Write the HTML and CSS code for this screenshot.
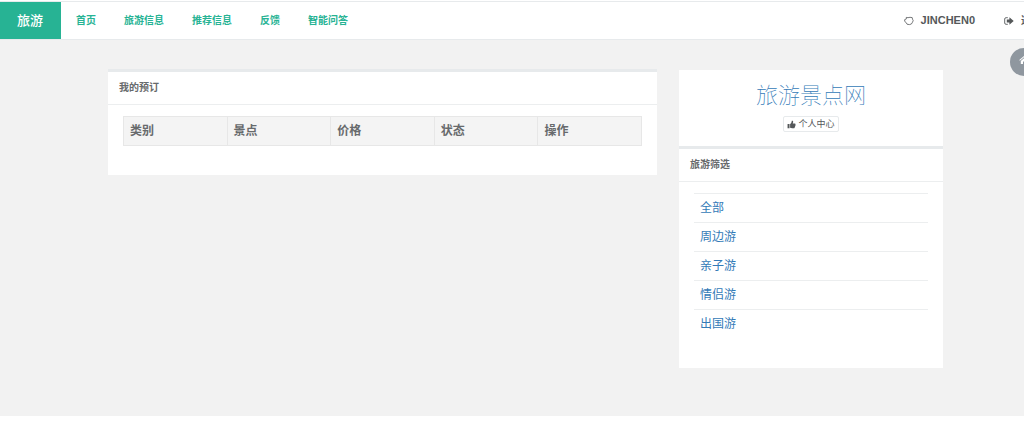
FILE: index.html
```html
<!DOCTYPE html>
<html lang="zh-CN">
<head>
<meta charset="utf-8">
<title>旅游景点网</title>
<link rel="stylesheet" href="styles.css">
</head>
<body>
<div class="page">
  <header class="navbar">
    <a class="brand" href="#">旅游</a>
    <nav class="menu">
      <a href="#">首页</a>
      <a href="#">旅游信息</a>
      <a href="#">推荐信息</a>
      <a href="#">反馈</a>
      <a href="#">智能问答</a>
    </nav>
    <div class="account">
      <a href="#">
        <svg class="icon" viewBox="0 0 10 10" fill="none" stroke="currentColor" stroke-width="0.8"><path d="M2.300 1.400 4 1.700 6 1.300 8.200 1.600 8.500 3.200 9.200 4.600 8.500 6.200 7.400 8 5.400 8.600 3 8.200 2.200 6.600.7 5.400.7 3.600 2.300 3z"/></svg>
        <span class="user-name">JINCHEN0</span>
      </a>
      <a href="#">
        <svg class="icon" viewBox="0 0 10 10"><path d="M3.800 1.700H2.100Q.7 1.700.7 3v4q0 1.300 1.400 1.300h1.700" fill="none" stroke="currentColor" stroke-width="0.9"/><path d="M5.400 1.300 9.700 5 5.400 8.700V6.600H2.800V3.400h2.600z" fill="currentColor"/></svg>
        <span>退出</span>
      </a>
    </div>
  </header>
  <main class="content">
    <section class="panel orders">
      <h2 class="panel-title">我的预订</h2>
      <div class="panel-body">
        <table class="order-table">
          <thead>
            <tr><th scope="col">类别</th><th scope="col">景点</th><th scope="col">价格</th><th scope="col">状态</th><th scope="col">操作</th></tr>
          </thead>
        </table>
      </div>
    </section>
    <aside class="sidebar">
      <section class="site-card">
        <h1 class="site-name"><a href="#">旅游景点网</a></h1>
        <button class="profile-button" type="button">
          <svg class="thumb" viewBox="0 0 16 16" fill="currentColor"><path d="M1 7h3.500v7.500H1zM5.500 7.200C7.500 6 8.200 4.500 8.500 1.500c2-.6 3 .7 2.300 3L10.200 6.300h3.600c1.700 0 2 1.700.9 2.400.8.8.4 1.900-.4 2.200.4.900 0 1.700-.7 2 .2 1.100-.4 1.800-1.600 1.800H9c-1.500 0-2.200-.7-3.500-.8z"/></svg>
          个人中心
        </button>
      </section>
      <section class="panel">
        <h2 class="panel-title">旅游筛选</h2>
        <div class="panel-body">
          <ul class="filters">
            <li><a href="#">全部</a></li>
            <li><a href="#">周边游</a></li>
            <li><a href="#">亲子游</a></li>
            <li><a href="#">情侣游</a></li>
            <li><a href="#">出国游</a></li>
          </ul>
        </div>
      </section>
    </aside>
  </main>
  <button class="home-button" type="button" aria-label="首页">
    <svg class="icon" viewBox="0 0 10 10" fill="currentColor"><path d="M5 1 .3 5l.6.7L5 2.300l4.100 3.400.6-.7L8.300 3.800V1.500H7v1.200zM5 3.200 1.800 5.900V9H4V6.500h2V9h2.200V5.900z"/></svg>
  </button>
</div>
</body>
</html>
```

FILE: styles.css
```css
* {
  box-sizing: border-box;
}

html {
  overflow: hidden;
}

body {
  margin: 0;
  overflow: hidden;
  background: #fff;
  color: #676a6c;
  font: 12px/17px "Liberation Sans", "Noto Sans CJK SC", sans-serif;
}

a {
  color: #337ab7;
  text-decoration: none;
}

/* The page runs past the right edge of the window. */
.page {
  position: relative;
  width: calc(100% + 27px);
  padding-top: 1px;
}

.navbar {
  display: flex;
  align-items: stretch;
  height: 39px;
  border-top: 1px solid #e7eaec;
  border-bottom: 1px solid #e7eaec;
  background: #fff;
  font-size: 10px;
  font-weight: bold;
}

.brand {
  display: flex;
  align-items: center;
  padding: 0 18px 0 17px;
  background: #27b394;
  color: #fff;
  font-size: 13px;
  font-weight: 500;
}

.menu,
.account {
  display: flex;
  align-items: center;
}

.menu {
  gap: 28px;
  padding-left: 15px;
}

.menu a {
  color: #27b394;
}

.account {
  gap: 29px;
  margin-left: auto;
  padding-right: 10px;
}

.account a {
  display: flex;
  align-items: center;
  gap: 7px;
  color: #55585a;
}

.user-name {
  font-size: 11px;
}

.icon {
  width: 10px;
  height: 10px;
}

.content {
  display: grid;
  grid-template-columns: 549fr 264fr;
  gap: 22px;
  align-items: start;
  padding: 29px 108px 48px;
  background: #f2f2f2;
}

.panel {
  border-top: 3px solid #e7eaec;
  background: #fff;
}

.panel-title {
  margin: 0;
  padding: 7px 11px;
  border-bottom: 1px solid #eceeef;
  font-size: 10px;
  font-weight: bold;
  line-height: 18px;
}

.panel-body {
  padding: 11px 15px 29px;
}

.order-table {
  width: 100%;
  border: 1px solid #e7e7e7;
  border-collapse: collapse;
  table-layout: fixed;
}

.order-table th {
  padding: 6px;
  border: 1px solid #e7e7e7;
  background: #f4f4f4;
  line-height: 16px;
  text-align: left;
}

.site-card {
  display: flex;
  flex-direction: column;
  align-items: center;
  margin-top: 1px;
  padding: 10px 15px 14px;
  background: #fff;
}

.site-name {
  margin: 0 0 4px;
  font-size: 22px;
  font-weight: 100;
  line-height: 32px;
}

.profile-button {
  display: flex;
  align-items: center;
  gap: 2px;
  padding: 0 3px;
  border: 1px solid #e7eaec;
  border-radius: 2px;
  background: #fff;
  color: #55585a;
  font: 9px/14px "Liberation Sans", "Noto Sans CJK SC", sans-serif;
}

.thumb {
  width: 9px;
  height: 9px;
}

.filters {
  margin: 0;
  padding: 0 0 1px;
  list-style: none;
}

.filters li {
  padding: 6px;
  border-top: 1px solid #eceeef;
  line-height: 16px;
}

.home-button {
  position: absolute;
  top: 48px;
  right: 13px;
  display: grid;
  justify-items: center;
  align-content: start;
  width: 28px;
  height: 28px;
  padding: 7px 0 0;
  border: 0;
  border-radius: 50%;
  background: #8f979f;
  color: #fff;
}
```
